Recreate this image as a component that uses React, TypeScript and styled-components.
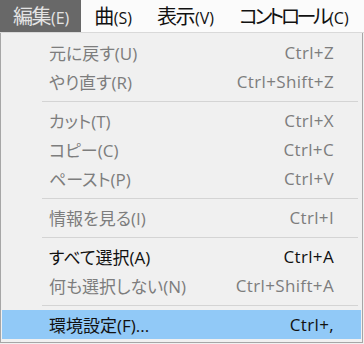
import styled, { createGlobalStyle } from 'styled-components';

const GlobalStyle = createGlobalStyle`
   html, body {
      margin: 0;
      padding: 0;
      background: #ffffff;
   }
   body {
      font-family: "Open Sans", "Noto Sans CJK JP", sans-serif;
      font-feature-settings: "palt";
   }
`;

const Window = styled.div`
   width: 364px;
   height: 344px;
   overflow: hidden;
   display: flex;
   flex-direction: column;
   background: #f0f0f0;
`;

const MenuBar = styled.nav`
   height: 32px;
   flex-shrink: 0;
   display: flex;
   align-items: stretch;
   background: #fbfbfb;
   border-bottom: 1px solid #d9d9d9;
`;

const BarItem = styled.div<{ $open?: boolean }>`
   display: flex;
   align-items: baseline;
   padding: 3px 12px 0 13px;
   white-space: nowrap;
   flex-shrink: 0;
   line-height: 28px;
   color: ${({ $open }) => ($open ? '#e4e4e4' : '#111111')};
   background: ${({ $open }) => ($open ? '#686868' : 'transparent')};
`;

// katakana in the UI font runs narrower than kanji
const BarLabel = styled.span<{ $kana?: boolean }>`
   font-size: 20px;
   letter-spacing: ${({ $kana }) => ($kana ? '-3.5px' : '-1.5px')};
   margin-right: 1px;
`;

const AccessKey = styled.span`
   font-size: 16px;
`;

const Dropdown = styled.div`
   flex: 1;
   display: flex;
   flex-direction: column;
   padding-top: 5px;
   margin-right: 1px;
   margin-bottom: 1px;
   border: 1px solid #a6a6a6;
   border-top: none;
   background: #f0f0f0;
`;

const Item = styled.div<{ $disabled?: boolean; $active?: boolean }>`
   height: 29px;
   display: flex;
   align-items: center;
   justify-content: space-between;
   padding: 0 27px 0 47px;
   margin: 0 1px;
   font-size: 17px;
   white-space: nowrap;
   color: ${({ $disabled }) => ($disabled ? '#7d7d7d' : '#111111')};
   background: ${({ $active }) => ($active ? '#91c9f7' : 'transparent')};
`;

const Shortcut = styled.span`
   letter-spacing: 0.35px;
`;

const Separator = styled.div`
   height: 10px;
   display: flex;
   align-items: center;
   padding: 0 4px 0 41px;

   &::after {
      content: '';
      flex: 1;
      height: 1px;
      background: #d4d4d4;
   }
`;

type Entry =
   | { label: string; keys: string; disabled?: boolean; active?: boolean }
   | 'sep';

const menus = [
   { label: '編集', key: '(E)', open: true },
   { label: '曲', key: '(S)' },
   { label: '表示', key: '(V)' },
   { label: 'コントロール', key: '(C)', kana: true },
];

const entries: Entry[] = [
   { label: '元に戻す(U)', keys: 'Ctrl+Z', disabled: true },
   { label: 'やり直す(R)', keys: 'Ctrl+Shift+Z', disabled: true },
   'sep',
   { label: 'カット(T)', keys: 'Ctrl+X', disabled: true },
   { label: 'コピー(C)', keys: 'Ctrl+C', disabled: true },
   { label: 'ペースト(P)', keys: 'Ctrl+V', disabled: true },
   'sep',
   { label: '情報を見る(I)', keys: 'Ctrl+I', disabled: true },
   'sep',
   { label: 'すべて選択(A)', keys: 'Ctrl+A' },
   { label: '何も選択しない(N)', keys: 'Ctrl+Shift+A', disabled: true },
   'sep',
   { label: '環境設定(F)...', keys: 'Ctrl+,', active: true },
];

export default function App() {
   return (
      <>
         <GlobalStyle />
         <Window>
            <MenuBar>
               {menus.map((menu) => (
                  <BarItem key={menu.label} $open={menu.open}>
                     <BarLabel $kana={menu.kana}>{menu.label}</BarLabel>
                     <AccessKey>{menu.key}</AccessKey>
                  </BarItem>
               ))}
            </MenuBar>
            <Dropdown>
               {entries.map((entry, index) =>
                  entry === 'sep' ? (
                     <Separator key={`sep-${index}`} />
                  ) : (
                     <Item
                        key={entry.label}
                        $disabled={entry.disabled}
                        $active={entry.active}
                     >
                        <span>{entry.label}</span>
                        <Shortcut>{entry.keys}</Shortcut>
                     </Item>
                  )
               )}
            </Dropdown>
         </Window>
      </>
   );
}
